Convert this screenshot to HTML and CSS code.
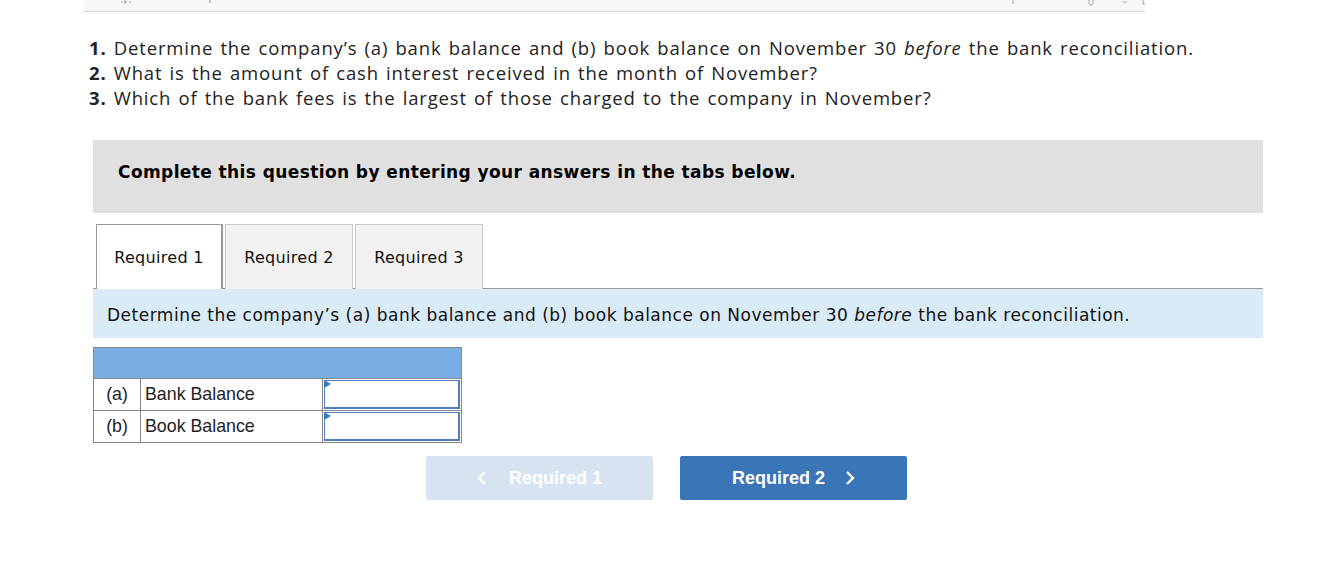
FILE: index.html
```html
<!DOCTYPE html>
<html>
<head>
<meta charset="utf-8">
<link rel="stylesheet" href="styles.css">
</head>
<body>
<div class="topbar">
  <svg class="tb-left" width="12" height="6" viewBox="0 0 12 6"><path d="M1 2h2M5 0v4M4 2h3M9 2h2" stroke="#aaa" stroke-width="1" fill="none"/></svg>
  <svg class="tb-dot" width="4" height="4" viewBox="0 0 4 4"><path d="M2 0v3" stroke="#999" fill="none"/></svg>
  <svg class="tb-right" width="140" height="6" viewBox="0 0 140 6"><path d="M2 0v4M78 0v3a2 2 0 0 0 4 0v-3M112 1l2 2 2-2M132 0v4h3M142 0v4h-3" stroke="#aaa" stroke-width="1" fill="none"/></svg>
</div>
<div class="page">
  <ol class="questions">
    <li><b>1.</b> Determine the company’s (a) bank balance and (b) book balance on November 30 <i>before</i> the bank reconciliation.</li>
    <li><b>2.</b> What is the amount of cash interest received in the month of November?</li>
    <li><b>3.</b> Which of the bank fees is the largest of those charged to the company in November?</li>
  </ol>
  <div class="instructions">Complete this question by entering your answers in the tabs below.</div>
  <div class="tabs">
    <div class="tab active">Required 1</div>
    <div class="tab">Required 2</div>
    <div class="tab">Required 3</div>
  </div>
  <div class="prompt">Determine the company’s (a) bank balance and (b) book balance on November 30 <i>before</i> the bank reconciliation.</div>
  <table class="answers">
    <tr class="head"><td colspan="3"></td></tr>
    <tr><td class="c-let">(a)</td><td class="c-lab">Bank Balance</td><td class="c-in"><div class="inp"></div></td></tr>
    <tr><td class="c-let">(b)</td><td class="c-lab">Book Balance</td><td class="c-in"><div class="inp"></div></td></tr>
  </table>
  <div class="nav">
    <div class="btn prev"><svg class="chev" width="10" height="16" viewBox="0 0 10 16"><path d="M8 2L2 8l6 6" stroke="#fff" stroke-width="2.4" fill="none"/></svg>Required 1</div>
    <div class="btn next">Required 2<svg class="chev" width="10" height="16" viewBox="0 0 10 16"><path d="M2 2l6 6-6 6" stroke="#fff" stroke-width="2.4" fill="none"/></svg></div>
  </div>
</div>
</body>
</html>
```
FILE: styles.css
```css
* { box-sizing: border-box; }
body {
  margin: 0;
  background: #fff;
  font-family: "Liberation Sans", Arial, sans-serif;
  color: #222;
}
.topbar {
  margin-left: 84px;
  width: 1061px;
  height: 12px;
  background: #f7f7f7;
  border-bottom: 1px solid #d4d4d4;
  position: relative;
  overflow: hidden;
}
.tb-left { position: absolute; left: 36px; top: 0; }
.tb-dot { position: absolute; left: 124px; top: 0; }
.tb-right { position: absolute; left: 927px; top: 0; }
.page {
  padding-left: 89px;
}
.questions {
  list-style: none;
  margin: 23px 0 0;
  padding: 0;
  font-family: "Open Sans", Lato, sans-serif;
  font-size: 18.5px;
  letter-spacing: 0.85px;
  word-spacing: 1.5px;
  line-height: 25px;
  color: #222;
  white-space: nowrap;
}
.questions b { font-weight: 700; }
.instructions {
  margin: 30px 0 0 4px;
  width: 1170px;
  height: 73px;
  background: #e0e0e0;
  font-family: "DejaVu Sans", Verdana, sans-serif;
  font-weight: bold;
  font-size: 17px;
  letter-spacing: 0.4px;
  color: #000;
  padding: 22px 0 0 25px;
}
.tabs {
  display: flex;
  gap: 2px;
  margin: 11px 0 0 7px;
  height: 65px;
}
.tab {
  width: 128px;
  height: 65px;
  background: #f2f2f2;
  border: 1px solid #c8c8c8;
  border-bottom: none;
  font-family: "DejaVu Sans", Verdana, sans-serif;
  font-size: 16px;
  letter-spacing: 0.3px;
  color: #111;
  display: flex;
  align-items: center;
  justify-content: center;
}
.tab.active {
  width: 127px;
  background: #fff;
  border-color: #999;
  border-width: 1px 2px 0 1px;
  position: relative;
  z-index: 1;
}
.prompt {
  margin: -1px 0 0 4px;
  width: 1170px;
  height: 50px;
  background: #daebf8;
  border-top: 1px solid #999;
  font-family: "DejaVu Sans", Verdana, sans-serif;
  font-size: 17px;
  letter-spacing: 0.5px;
  color: #111;
  padding: 16px 0 0 14px;
}
.answers {
  margin: 9px 0 0 4px;
  border-collapse: collapse;
  font-family: "Liberation Sans", Arial, sans-serif;
  font-size: 17.8px;
  color: #222;
}
.answers td {
  border: 1px solid #888;
  padding: 0;
}
.answers tr td { height: 32px; }
.answers tr.head td {
  height: 31px;
  background: #79ade3;
}
.c-let { width: 47px; text-align: center; }
.c-lab { width: 182px; padding-left: 4px !important; }
.c-in { width: 139px; padding: 1px !important; }
.inp {
  height: 29px;
  border: 1px solid #4d7fbf;
  border-width: 1px 2px 2px 1px;
  position: relative;
}
.inp::before {
  content: "";
  position: absolute;
  left: -1px;
  top: -1px;
  border-left: 7px solid #3a78c9;
  border-top: 4px solid transparent;
  border-bottom: 4px solid transparent;
  width: 0;
  height: 0;
}
.nav {
  display: flex;
  gap: 27px;
  margin: 13px 0 0 337px;
}
.btn {
  width: 227px;
  height: 44px;
  border-radius: 2px;
  color: #fff;
  font-family: "Liberation Sans", Arial, sans-serif;
  font-weight: bold;
  font-size: 18px;
  display: flex;
  align-items: center;
  justify-content: center;
}
.btn.prev { background: #d7e3f0; }
.btn.next { background: #3a75b8; }
.prev .chev { margin-right: 22px; }
.next .chev { margin-left: 20px; }
```
